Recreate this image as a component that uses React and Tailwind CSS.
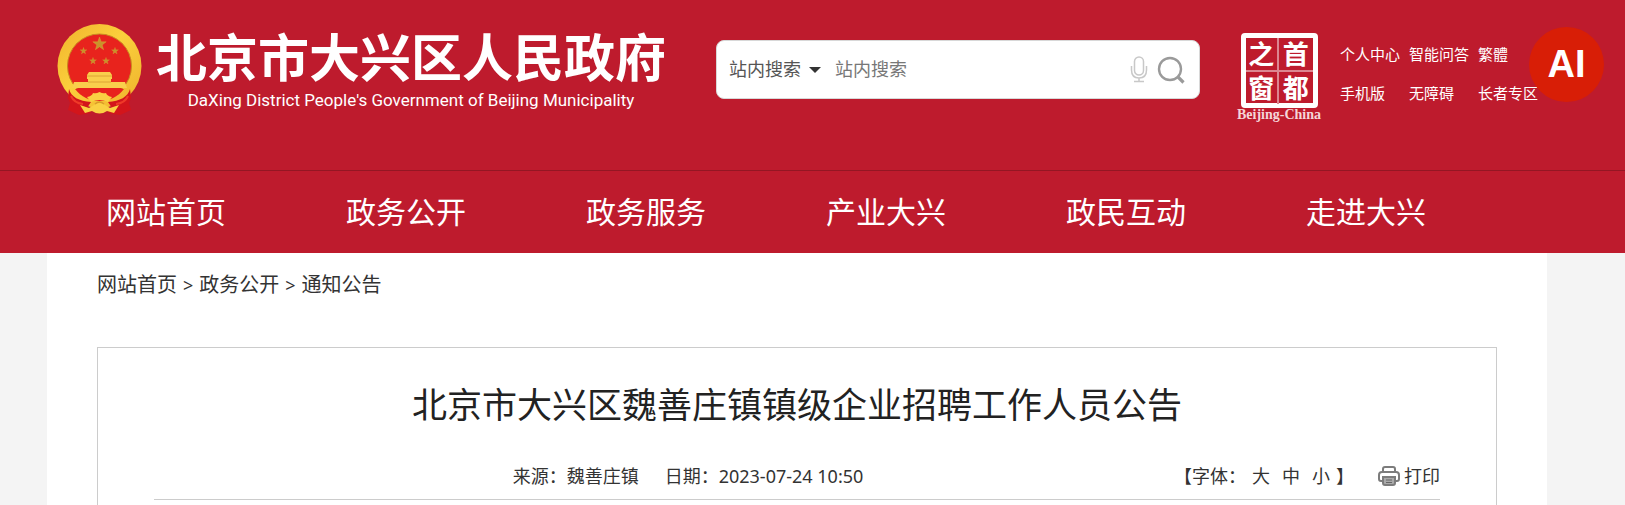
const navItems = ["网站首页", "政务公开", "政务服务", "产业大兴", "政民互动", "走进大兴"];

const quickLinks = ["个人中心", "智能问答", "繁體", "手机版", "无障碍", "长者专区"];

const crumbs = ["网站首页", "政务公开", "通知公告"];

const star = "M0 -7 L1.7 -2.2 L6.7 -2.2 L2.7 0.9 L4.1 5.7 L0 2.8 L-4.1 5.7 L-2.7 0.9 L-6.7 -2.2 L-1.7 -2.2 Z";

function Emblem() {
  return (
    <svg viewBox="0 0 85 92" className="w-[85px] h-[92px] shrink-0" aria-hidden="true">
      <defs>
        <linearGradient id="gold" x1="0" y1="0" x2="1" y2="1">
          <stop offset="0" stopColor="#f0b22c" />
          <stop offset="0.45" stopColor="#fbd03c" />
          <stop offset="1" stopColor="#eeb02c" />
        </linearGradient>
      </defs>
      <circle cx="42.5" cy="42" r="42" fill="url(#gold)" />
      <circle cx="42.5" cy="42" r="32" fill="#e8231d" stroke="#c98a20" strokeWidth="1" />
      <g fill="#c8922b" stroke="#e0a93a" strokeWidth="0.4">
        <path d={star} transform="translate(42.5 20)" />
        <path d={star} transform="translate(26.5 27) scale(.52)" />
        <path d={star} transform="translate(58 27) scale(.52)" />
        <path d={star} transform="translate(36 37) scale(.52)" />
        <path d={star} transform="translate(49 37) scale(.52)" />
      </g>
      <path d="M32 48 H53 L55 51 V55 H54 V58 H68 L70 64 H15 L17 58 H31 V55 H30 V51 Z" fill="#f9cf4c" />
      <path d="M30 52 H55 M31 58 H54" stroke="#d79b2d" strokeWidth="0.8" />
      <path d="M18 65 H67 C61 73 52 77 42.5 77 C33 77 24 73 18 65 Z" fill="#e8231d" />
      <path d="M12 65 C14 73 22 77 34 78 L30 84 L34 89 L22 91 L11 86 L13 79 L11 74 Z" fill="#d3151b" />
      <path d="M73 65 C71 73 63 77 51 78 L55 84 L51 89 L63 91 L74 86 L72 79 L74 74 Z" fill="#d3151b" />
      <path d="M14 72 Q17 79 26 80 M71 72 Q68 79 59 80" fill="none" stroke="#ef3a28" strokeWidth="2" />
      <path d="M30 73 Q35 72 36 69 Q39 70 42.5 68 Q46 70 49 69 Q50 72 55 73 L51 78 Q42.5 74 34 78 Z" fill="#fad043" />
      <path d="M23 81 L32 84 L37 81 Q42.500 77 48 81 L53 84 L62 81 L57 89 L50 87 Q42.5 92 35 87 L28 89 Z" fill="#fad043" />
      <path d="M38 80 Q42.500 76 47 80" fill="none" stroke="#d99c2a" strokeWidth="1.5" />
    </svg>
  );
}

function Seal() {
  return (
    <a href="#" className="flex flex-col items-center w-[86px] shrink-0 text-white">
      <span className="grid grid-cols-2 w-[77px] h-[75px] border-[5px] border-white rounded-[4px] text-[26px] leading-[32px] font-bold text-center">
        <span className="border-r-2 border-b-2 border-[#dc8690]">之</span>
        <span className="border-b-2 border-[#dc8690]">首</span>
        <span className="border-r-2 border-[#dc8690]">窗</span>
        <span>都</span>
      </span>
      <span className="font-['Liberation_Serif',serif] font-bold text-[14px] leading-[14px] whitespace-nowrap text-[#f5d5d8]">
        Beijing-China
      </span>
    </a>
  );
}

function SearchBox() {
  return (
    <form
      className="flex items-center flex-1 max-w-[484px] h-[59px] mt-4 pl-3 pr-[14px] bg-white rounded-lg border border-[#d8d8d8] text-[18px]"
      onSubmit={(e) => e.preventDefault()}
    >
      <select
        aria-label="搜索范围"
        className="appearance-none w-[72px] text-[#555] bg-transparent outline-none"
      >
        <option>站内搜索</option>
      </select>
      <svg viewBox="0 0 12 6" className="w-3 h-[6px] ml-2 shrink-0" aria-hidden="true">
        <path d="M0 0 H12 L6 6 Z" fill="#333" />
      </svg>
      <input
        type="text"
        aria-label="站内搜索"
        placeholder="站内搜索"
        className="flex-1 min-w-0 ml-[14px] text-[#333] placeholder:text-[#777] outline-none"
      />
      <button type="button" aria-label="语音">
        <svg viewBox="0 0 18 27" className="w-[18px] h-[27px]" fill="none" stroke="#c8c8c8" strokeWidth="1.5">
          <rect x="4.5" y="1" width="9" height="18" rx="4.5" />
          <path d="M1.500 10 V14 Q1.500 22 9 22 Q16.500 22 16.500 14 V10 M9 22 V25 M4 25.5 H14" />
        </svg>
      </button>
      <button type="submit" aria-label="搜索" className="ml-[9px]">
        <svg viewBox="0 0 28 28" className="w-7 h-7" fill="none" stroke="#9a9a9a">
          <circle cx="13" cy="13" r="11" strokeWidth="2.4" />
          <path d="M20.5 20.5 L26.5 26.5" strokeWidth="3.2" />
        </svg>
      </button>
    </form>
  );
}

function Header() {
  return (
    <header className="relative bg-[#be1b2d] text-white">
      <div className="flex items-start pl-[57px] pt-6 pb-12 border-b border-[#941623]">
        <a href="#" className="flex items-start shrink-0">
          <Emblem />
          <span className="flex flex-col items-center ml-[14px] mt-[6px]">
            <span className="text-[51px] leading-[54px] font-bold whitespace-nowrap">
              北京市大兴区人民政府
            </span>
            <span className="font-['Roboto',sans-serif] text-[17px] leading-[32px] whitespace-nowrap">
              DaXing District People's Government of Beijing Municipality
            </span>
          </span>
        </a>
        <div className="flex flex-1 items-start ml-[50px]">
          <SearchBox />
          <div className="flex items-start ml-9 mt-[9px]">
            <Seal />
            <ul className="grid grid-cols-[69px_69px_69px] gap-y-[9px] ml-[18px] mt-[6px] text-[15px] leading-[30px] whitespace-nowrap">
              {quickLinks.map((item) => (
                <li key={item}>
                  <a href="#">{item}</a>
                </li>
              ))}
            </ul>
          </div>
        </div>
      </div>

      <nav>
        <ul className="grid grid-cols-6 ml-[46px] max-w-[1440px] text-[30px] leading-[82px] text-center">
          {navItems.map((item) => (
            <li key={item}>
              <a href="#">{item}</a>
            </li>
          ))}
        </ul>
      </nav>

      <button
        type="button"
        className="absolute right-[21px] top-[27px] w-[75px] h-[75px] rounded-full bg-[#d81e06] font-['Liberation_Sans',sans-serif] font-bold text-[38px]"
      >
        AI
      </button>
    </header>
  );
}

function PrintIcon() {
  return (
    <svg viewBox="0 0 22 20" className="w-[22px] h-5" fill="none" stroke="#7c7c7c" strokeWidth="2" aria-hidden="true">
      <path d="M5 6 V3 Q5 1 7 1 H15 Q17 1 17 3 V6" />
      <path d="M5 15 H3 Q1 15 1 13 V9 Q1 6 4 6 H18 Q21 6 21 9 V13 Q21 15 19 15 H17" />
      <path d="M5 11 H17 V17 Q17 19 15 19 H7 Q5 19 5 17 Z" fill="#aaa" />
      <path d="M8 14 H14 M8 16.5 H14" stroke="#666" strokeWidth="1" />
    </svg>
  );
}

export default function App() {
  return (
    <div lang="zh-CN" className="min-h-screen bg-[#f4f4f4] font-['Noto_Sans','Noto_Sans_CJK_SC',sans-serif]">
      <Header />
      <main className="ml-[47px] mr-[78px] min-h-[252px] px-[50px] bg-white">
        <div className="flex gap-[6px] pt-4 text-[20px] leading-8 text-[#333]">
          {crumbs.map((item, i) => (
            <span key={item} className="flex gap-[6px]">
              {i > 0 && <span className="text-[18px]">&gt;</span>}
              <a href="#">{item}</a>
            </span>
          ))}
        </div>

        <article className="mt-[46px] px-14 pb-[6px] border border-b-0 border-[#ccc]">
          <h1 className="pt-8 text-[35px] leading-[50px] text-center text-[#222]">
            北京市大兴区魏善庄镇镇级企业招聘工作人员公告
          </h1>
          <div className="flex items-center mt-[30px] pb-[7px] border-b border-[#ccc] text-[18px] leading-8 text-[#333]">
            <p className="flex flex-1 justify-center gap-[26px] pl-12">
              <span>来源：魏善庄镇</span>
              <span>日期：2023-07-24 10:50</span>
            </p>
            <div className="flex items-center">
              <span>【字体：</span>
              <span className="flex gap-3 ml-[6px]">
                <button type="button">大</button>
                <button type="button">中</button>
                <button type="button">小</button>
              </span>
              <span className="ml-[6px]">】</span>
              <button type="button" className="flex items-center gap-1 ml-6">
                <PrintIcon />
                打印
              </button>
            </div>
          </div>
        </article>
      </main>
    </div>
  );
}
